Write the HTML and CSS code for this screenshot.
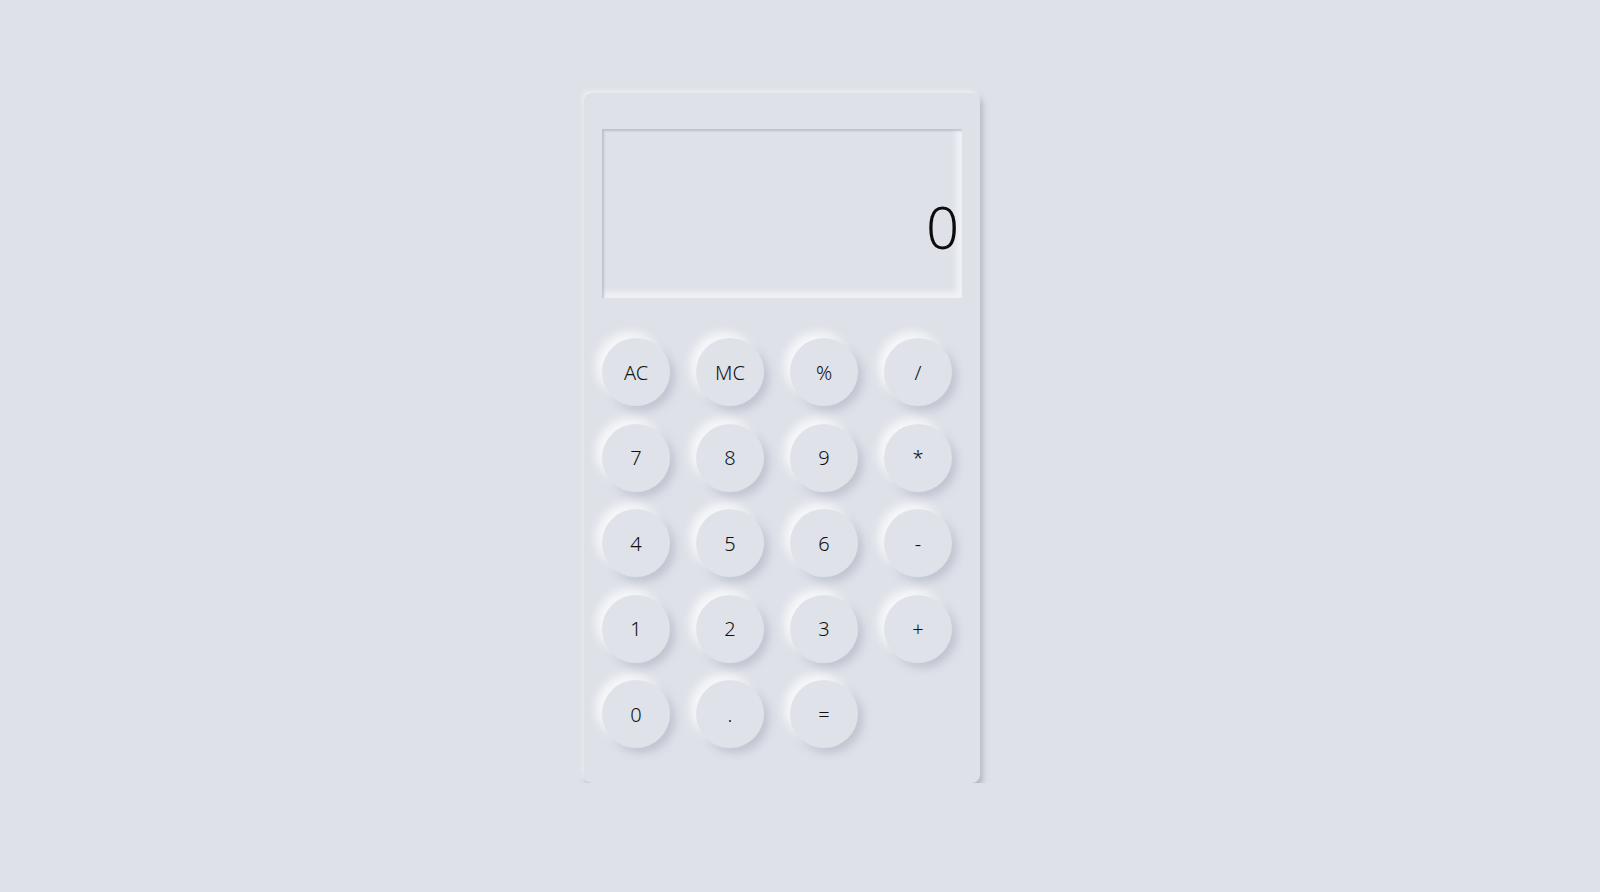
FILE: index.html
```html
<!DOCTYPE html>
<html lang="en">
<head>
  <meta charset="utf-8">
  <title>Calculator</title>
  <link rel="stylesheet" href="styles.css">
</head>
<body>
  <div class="calculator">
    <div class="screen">
      <span class="result">0</span>
    </div>
    <div class="keys">
      <button class="key">AC</button>
      <button class="key">MC</button>
      <button class="key">%</button>
      <button class="key">/</button>
      <button class="key">7</button>
      <button class="key">8</button>
      <button class="key">9</button>
      <button class="key">*</button>
      <button class="key">4</button>
      <button class="key">5</button>
      <button class="key">6</button>
      <button class="key">-</button>
      <button class="key">1</button>
      <button class="key">2</button>
      <button class="key">3</button>
      <button class="key">+</button>
      <button class="key">0</button>
      <button class="key">.</button>
      <button class="key">=</button>
    </div>
  </div>
</body>
</html>
```
FILE: styles.css
```css
* {box-sizing: border-box}
body {margin: 0; padding-top: 93px; background: #dee1e8; font-family: "Noto Sans", "Open Sans", sans-serif; color: #1d1d1f}

.calculator {width: 396px; height: 690px; margin-left: 584px; padding: 36px 18px 35px 18px; border-radius: 8px; background: #dee1e8; box-shadow: -2px -2px 5px rgba(255,255,255,0.6), 2px 4px 6px rgba(130,136,156,0.6)}

.screen {height: 169px; display: flex; align-items: center; justify-content: flex-end; padding: 26px 3px 0 0; background: #dee1e8; box-shadow: inset 2px 2px 2px rgba(160,165,182,0.55), inset -6px -6px 6px rgba(255,255,255,0.55)}
.result {font-size: 58px; font-weight: 300; line-height: 1; color: #0c0c0c}

.keys {display: grid; grid-template-columns: repeat(4, 68px); column-gap: 26px; row-gap: 17.5px; margin-top: 40px}
.key {width: 68px; height: 68px; border: 0; border-radius: 50%; padding: 0; background: #dfe2e9; font-family: inherit; font-size: 20px; font-weight: 350; color: #111; cursor: pointer; box-shadow: -6px -6px 10px rgba(255,255,255,0.75), 5px 5px 8px rgba(155,161,180,0.45)}
.key:focus {outline: none}
```
